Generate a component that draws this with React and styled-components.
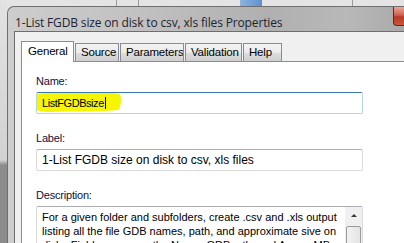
import styled, { createGlobalStyle } from "styled-components";

const Global = createGlobalStyle`
  html, body { margin: 0; padding: 0; overflow: hidden; }
  body {
    width: 404px;
    height: 243px;
    font-family: "Liberation Sans", Arial, sans-serif;
    background:
      linear-gradient(90deg, transparent 116px, #9a9a9a 116px, #9a9a9a 117px, transparent 117px,
        transparent 138px, #9a9a9a 138px, #9a9a9a 139px, transparent 139px,
        transparent 240px, #8fb4dc 240px, #5d8fcf 262px, transparent 262px,
        transparent 352px, #9a9a9a 352px, #9a9a9a 353px, transparent 353px),
      #e4e4e4;
  }
`;

const Screen = styled.div`
  display: flex;
  height: 243px;
  padding-top: 6px;
  box-sizing: border-box;
`;

const BackStrip = styled.div`
  width: 7px;
  flex: none;
  margin-top: -6px;
  background: linear-gradient(180deg, #e2e2e2 0, #d2d2d2 160px, #8c8c8c 165px, #8c8c8c 100%);
`;

const Window = styled.div`
  flex: 1;
  display: flex;
  flex-direction: column;
  border-top-left-radius: 7px;
  border-top: 1px solid #6f6f6f;
  border-left: 1px solid #6f6f6f;
  background: linear-gradient(90deg, #cdcdcd 0, #c2c2c2 120px, #b0b0b0 260px, #b8b8b8 340px, #a9a9a9 100%);
  padding-left: 6px;
  overflow: hidden;
`;

const TitleBar = styled.div`
  height: 27px;
  display: flex;
  align-items: flex-start;
  justify-content: space-between;
`;

const Title = styled.div`
  padding: 7px 0 0 1px;
  font-family: "Open Sans", "Liberation Sans", sans-serif;
  font-size: 12px;
  letter-spacing: -0.15px;
  color: #1c2430;
`;

const CloseButton = styled.div`
  width: 10px;
  height: 18px;
  border: 1px solid #5a2a24;
  border-right: none;
  border-top: none;
  border-bottom-left-radius: 4px;
  background: linear-gradient(180deg, #e9a79c 0, #d0614f 45%, #b83a24 55%, #c9573c 100%);
`;

const Client = styled.div`
  flex: 1;
  background: #f0f0f0;
  border-top: 1px solid #6e6e6e;
  border-left: 1px solid #6e6e6e;
  padding: 8px 0 0 6px;
  display: flex;
  flex-direction: column;
`;

const Tabs = styled.div`
  display: flex;
  align-items: flex-end;
  height: 21px;
  position: relative;
  z-index: 1;
`;

const Tab = styled.div`
  box-sizing: border-box;
  width: ${(p) => p.$w}px;
  height: ${(p) => (p.$active ? 21 : 18)}px;
  margin-bottom: ${(p) => (p.$active ? -1 : 0)}px;
  border: 1px solid #898c95;
  border-bottom: 0;
  background: ${(p) =>
    p.$active ? "#ffffff" : "linear-gradient(180deg, #f3f3f3 0, #ebebeb 50%, #dddddd 51%, #cfcfcf 100%)"};
  margin-right: 1px;
  font-size: 11.5px;
  letter-spacing: -0.2px;
  color: #000;
  padding: ${(p) => (p.$active ? "3px 0 0 6px" : "2px 0 0 5px")};
  white-space: nowrap;
  overflow: hidden;
`;

const Panel = styled.div`
  flex: 1;
  background: #fff;
  border-top: 1px solid #898c95;
  border-left: 1px solid #898c95;
  padding: 12px 0 0 14px;
  display: flex;
  flex-direction: column;
  gap: 17px;
`;

const Field = styled.div`
  display: flex;
  flex-direction: column;
`;

const Label = styled.div`
  font-size: 11px;
  letter-spacing: -0.2px;
  line-height: 14px;
  margin-bottom: 4px;
  color: #10103a;
`;

const InputBox = styled.div`
  position: relative;
  box-sizing: border-box;
  width: 327px;
  height: ${(p) => (p.$tall ? "60px" : "22px")};
  border: 1px solid ${(p) => (p.$focus ? "#b8d3ea" : "#dadada")};
  border-top-color: ${(p) => (p.$focus ? "#3d7bad" : "#abadb3")};
  border-radius: 2px;
  background: #fff;
  font-size: ${(p) => (p.$tall ? "11px" : "12px")};
  line-height: 14px;
  padding: ${(p) => (p.$tall ? "3px 22px 0 5px" : "3px 0 0 5px")};
  color: #000;
  white-space: nowrap;
  overflow: hidden;
`;

const Highlight = styled.svg`
  position: absolute;
  left: -6px;
  top: -3px;
  z-index: 0;
`;

const InputText = styled.span`
  position: relative;
  z-index: 1;
  font-size: 11px;
  letter-spacing: -0.45px;
  border-right: 1px solid #000;
  padding-right: 1px;
`;

const ScrollBar = styled.div`
  position: absolute;
  top: 0;
  right: 0;
  width: 17px;
  bottom: 0;
  background: #f0f0f0;
  display: flex;
  flex-direction: column;
  gap: 2px;
`;

const ScrollArrow = styled.div`
  height: 17px;
  display: flex;
  align-items: center;
  justify-content: center;
  &::before {
    content: "";
    border-left: 3px solid transparent;
    border-right: 3px solid transparent;
    border-bottom: 3px solid #3a3a3a;
  }
`;

const Thumb = styled.div`
  flex: 1;
  margin: 0 1px;
  border: 1px solid #9b9b9b;
  border-radius: 2px;
  background: linear-gradient(90deg, #f2f2f2, #e4e4e4);
`;

export default function App() {
  return (
    <>
      <Global />
      <Screen>
        <BackStrip />
        <Window>
          <TitleBar>
            <Title>1-List FGDB size on disk to csv, xls files Properties</Title>
            <CloseButton />
          </TitleBar>
          <Client>
            <Tabs>
              <Tab $active $w={53}>General</Tab>
              <Tab $w={44}>Source</Tab>
              <Tab $w={64}>Parameters</Tab>
              <Tab $w={57}>Validation</Tab>
              <Tab $w={39}>Help</Tab>
            </Tabs>
            <Panel>
              <Field>
                <Label>Name:</Label>
                <InputBox $focus>
                  <Highlight width="92" height="24" viewBox="0 0 92 24">
                    <path
                      d="M1 5 C10 2 30 3 50 1 C65 0 80 2 89 4 C91 9 90 15 88 20 C70 22 40 21 20 22 C10 22 4 20 1 18 C0 13 0 9 1 5 Z"
                      fill="#f6f600"
                    />
                  </Highlight>
                  <InputText>ListFGDBsize</InputText>
                </InputBox>
              </Field>
              <Field>
                <Label>Label:</Label>
                <InputBox>1-List FGDB size on disk to csv, xls files</InputBox>
              </Field>
              <Field>
                <Label>Description:</Label>
                <InputBox $tall>
                  For a given folder and subfolders, create .csv and .xls output
                  <br />
                  listing all the file GDB names, path, and approximate sive on
                  <br />
                  disk.&nbsp; Field names are the Name, GDBpath, and ApproxMB
                  <ScrollBar>
                    <ScrollArrow />
                    <Thumb />
                  </ScrollBar>
                </InputBox>
              </Field>
            </Panel>
          </Client>
        </Window>
      </Screen>
    </>
  );
}
